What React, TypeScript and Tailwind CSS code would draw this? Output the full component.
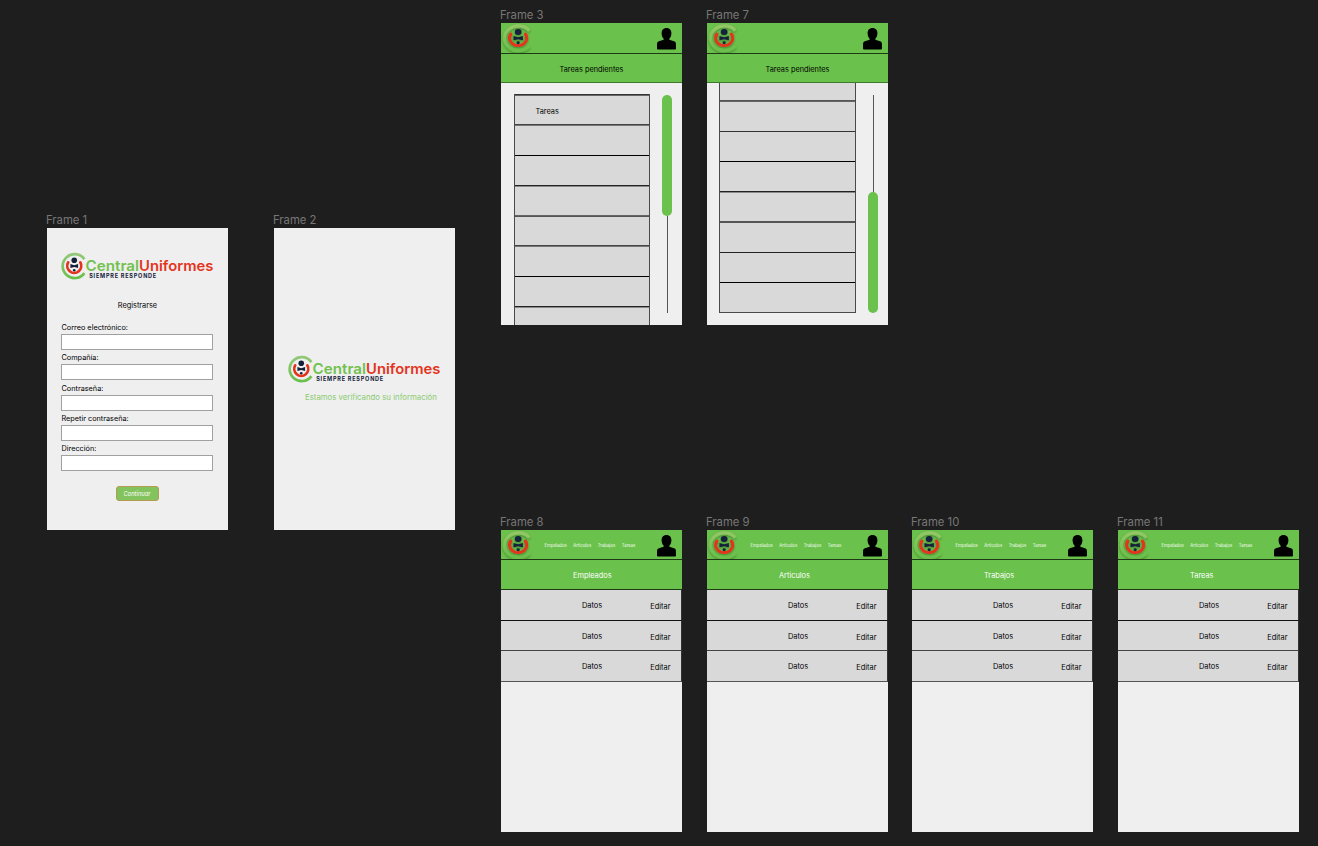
import type { ReactNode } from "react";

const FIELDS = ["Correo electrónico:", "Compañía:", "Contraseña:", "Repetir contraseña:", "Dirección:"];
const NAV = ["Empelados", "Articulos", "Trabajos", "Tareas"];

const TOP_ROWS = [
  "h-[30px] border-t border-[#333333] shadow-[inset_0_1px_#666666]",
  "h-[31px] border-t border-[#444444] shadow-[inset_0_1px_#777777]",
  "h-[30px] border-t border-black",
  "h-[30px] border-t border-[#222222] shadow-[inset_0_1px_#8a8a8a]",
  "h-[30px] border-t border-[#666666] shadow-[inset_0_1px_#555555]",
  "h-[31px] border-t border-[#444444] shadow-[inset_0_1px_#777777]",
  "h-[30px] border-t border-black",
  "h-[20px] border-t border-[#222222] shadow-[inset_0_1px_#8a8a8a]",
];

const BOTTOM_ROWS = [
  "h-[17px]",
  "h-[31px] border-t border-[#555555] shadow-[inset_0_1px_#666666]",
  "h-[30px] border-t border-[#333333]",
  "h-[30px] border-t border-black",
  "h-[30px] border-t border-[#222222] shadow-[inset_0_1px_#8a8a8a]",
  "h-[31px] border-t border-[#555555] shadow-[inset_0_1px_#555555]",
  "h-[30px] border-t border-[#222222]",
  "h-[30px] border-t border-black",
];

function Frame({ name, place, children }: { name: string; place: string; children: ReactNode }) {
  return (
    <section className={`absolute flex w-[181px] flex-col ${place}`}>
      <h2 className="-ml-px h-[17px] whitespace-nowrap text-[11.3px] leading-[19px] text-[#777777]">{name}</h2>
      <div className="flex h-[302px] flex-col overflow-hidden bg-[#efefef]">{children}</div>
    </section>
  );
}

function Figure() {
  return (
    <>
      <path d="M7.2 9.3 A7 7 0 1 0 19.3 9.3" fill="none" stroke="#e4341d" strokeWidth="2.7" strokeLinecap="round" />
      <circle cx="13.25" cy="7.3" r="2.8" fill="#14203a" />
      <path d="M9.4 11.1 L13.25 12.2 L17.1 11.1 V15 L13.25 14 L9.4 15 Z" fill="#14203a" />
      <circle cx="13.25" cy="17.2" r="1.3" fill="#14203a" />
    </>
  );
}

function Brand() {
  return (
    <svg width="153" height="28" viewBox="0 0 153 28" className="block shrink-0 overflow-visible">
      <defs>
        <linearGradient id="brand-ring" x1="0" y1="0" x2="0" y2="1">
          <stop offset="0" stopColor="#93c87a" />
          <stop offset="1" stopColor="#6abf4b" />
        </linearGradient>
      </defs>
      <path d="M23.4 6.1 A12 12 0 1 0 23.4 20.1" fill="none" stroke="url(#brand-ring)" strokeWidth="2.7" />
      <Figure />
      <text x="24.6" y="18.3" fontSize="14.6" fontWeight="600" textLength="53.4" lengthAdjust="spacingAndGlyphs" fill="#72c150">Central</text>
      <text x="78" y="18.3" fontSize="14.6" fontWeight="600" textLength="74.4" lengthAdjust="spacingAndGlyphs" fill="#e4341d">Uniformes</text>
      <text x="28.2" y="25" fontSize="5.5" fontWeight="700" textLength="67" lengthAdjust="spacing" fill="#14203a">SIEMPRE RESPONDE</text>
    </svg>
  );
}

function Emblem() {
  return (
    <svg width="33" height="30" viewBox="0 0 33 30" className="block">
      <defs>
        <linearGradient id="emblem-ring" x1="0" y1="0" x2="0" y2="1">
          <stop offset="0" stopColor="#93c765" />
          <stop offset="1" stopColor="#69bf4a" />
        </linearGradient>
        <filter id="emblem-shadow" x="-20%" y="-20%" width="140%" height="150%">
          <feDropShadow dx="0" dy="1.2" stdDeviation="0.9" floodColor="#000" floodOpacity="0.32" />
        </filter>
      </defs>
      <g filter="url(#emblem-shadow)">
        <path d="M28.4 7.6 A14 12.4 0 1 0 28.4 23" fill="none" stroke="url(#emblem-ring)" strokeWidth="3.2" />
        <g transform="translate(1 1) scale(1.22 1.09)">
          <Figure />
        </g>
      </g>
    </svg>
  );
}

function Person() {
  return (
    <svg width="19" height="22" viewBox="0 0 19 22" className="block" fill="#000">
      <path d="M9.5 0 C6.2 0 4.5 2.4 4.6 5.4 C4.7 7.8 5.6 9.6 6.8 10.8 V11.4 C5 12.4 1.8 12.9 .7 13.9 C0 14.6 0 16 0 20.4 Q0 21.4 1 21.4 H18 Q19 21.4 19 20.4 C19 16 19 14.6 18.3 13.9 C17.2 12.9 14 12.4 12.2 11.4 V10.8 C13.4 9.6 14.3 7.8 14.4 5.4 C14.5 2.4 12.8 0 9.5 0 Z" />
    </svg>
  );
}

function TopBar({ nav = false }: { nav?: boolean }) {
  return (
    <header className={`flex shrink-0 justify-between overflow-hidden border-b border-[#1e3a14] bg-[#6ac14b] pr-[6px] ${nav ? "h-[30px]" : "h-[31px]"}`}>
      <Emblem />
      {nav && (
        <nav className="flex w-[102px] gap-[6.7px] whitespace-nowrap text-[4.25px] leading-[31px] text-white/90">
          {NAV.map((n) => (
            <span key={n}>{n}</span>
          ))}
        </nav>
      )}
      <div className="pt-[4.5px]">
        <Person />
      </div>
    </header>
  );
}

function Scroller({ bottom = false }: { bottom?: boolean }) {
  return (
    <div className="mt-[12px] ml-[12px] flex h-[218px] w-[10px] flex-col items-center">
      {bottom && <div className="w-px flex-1 bg-[#555555]" />}
      <div className="h-[121px] w-[10px] shrink-0 rounded-full bg-[#6ac14b]" />
      {!bottom && <div className="w-px flex-1 bg-[#555555]" />}
    </div>
  );
}

function Tasks({ bottom = false }: { bottom?: boolean }) {
  return (
    <>
      <TopBar />
      <div className="h-[29px] shrink-0 border-b border-[#3f7a2c] bg-[#6ac14b] text-center text-[7.35px] leading-[31px] text-black">
        Tareas pendientes
      </div>
      <div className={`flex min-h-0 flex-1 ${bottom ? "pl-[12px]" : "pl-[13px]"}`}>
        <div className={`shrink-0 self-start border-x border-[#4a4a4a] ${bottom ? "w-[137px] border-b" : "mt-[11px] w-[136px]"}`}>
          {(bottom ? BOTTOM_ROWS : TOP_ROWS).map((row, i) => (
            <div key={i} className={`bg-[#d9d9d9] pl-[20.5px] text-[7.35px] leading-[33px] text-black ${row}`}>
              {!bottom && i === 0 ? "Tareas" : ""}
            </div>
          ))}
        </div>
        <Scroller bottom={bottom} />
      </div>
    </>
  );
}

function Admin({ title }: { title: string }) {
  return (
    <>
      <TopBar nav />
      <div className="h-[30px] shrink-0 border-b border-[#1e3a14] bg-[#6ac14b] pl-[72px] text-[7.4px] leading-[31px] text-white">
        {title}
      </div>
      {[0, 1, 2].map((i) => (
        <div
          key={i}
          className={`grid shrink-0 grid-cols-[1fr_20px_1fr] border-r border-b border-r-[#333333] bg-[#d9d9d9] pl-[2px] text-[7.4px] text-black ${i === 0 ? "h-[31px] border-b-[#111111]" : i === 1 ? "h-[30px] border-b-[#444444]" : "h-[31px] border-b-[#555555]"}`}
        >
          <span />
          <span className="text-center leading-[31px]">Datos</span>
          <span className="pr-[10.5px] text-right leading-[33px]">Editar</span>
        </div>
      ))}
    </>
  );
}

export default function App() {
  return (
    <main className="relative h-[846px] w-[1318px] overflow-hidden bg-[#1e1e1e] font-['Inter',sans-serif]">
      <Frame name="Frame 1" place="left-[47px] top-[211px]">
        <div className="flex flex-col px-[14px] pt-[25px]">
          <Brand />
          <h1 className="mt-[19px] text-center text-[7.35px] leading-[12px] text-black">Registrarse</h1>
          <form className="mt-[10px] flex flex-col">
            {FIELDS.map((f) => (
              <label key={f} className="flex h-[30.3px] flex-col whitespace-nowrap text-[7.3px] leading-[12px] text-black">
                <span className="h-[12px] pl-[0.5px]">{f}</span>
                <span className="h-[16px] w-[152px] border border-[#a0a0a0] bg-white" />
              </label>
            ))}
            <button type="button" className="mt-[13px] h-[15px] w-[43px] self-center rounded-[3px] border border-[#b59a52] bg-[#82c35d] pr-px text-[5.8px] leading-[14px] text-white italic">
              Continuar
            </button>
          </form>
        </div>
      </Frame>
      <Frame name="Frame 2" place="left-[274px] top-[211px]">
        <div className="flex flex-col pt-[128px] pl-[14px]">
          <Brand />
          <p className="mt-[7px] pl-[17px] text-[7.8px] leading-[12px] whitespace-nowrap text-[#8ccb71]">Estamos verificando su información</p>
        </div>
      </Frame>
      <Frame name="Frame 3" place="left-[501px] top-[6px]">
        <Tasks />
      </Frame>
      <Frame name="Frame 7" place="left-[707px] top-[6px]">
        <Tasks bottom />
      </Frame>
      <Frame name="Frame 8" place="left-[501px] top-[513px]">
        <Admin title="Empleados" />
      </Frame>
      <Frame name="Frame 9" place="left-[707px] top-[513px]">
        <Admin title="Articulos" />
      </Frame>
      <Frame name="Frame 10" place="left-[912px] top-[513px]">
        <Admin title="Trabajos" />
      </Frame>
      <Frame name="Frame 11" place="left-[1118px] top-[513px]">
        <Admin title="Tareas" />
      </Frame>
    </main>
  );
}
